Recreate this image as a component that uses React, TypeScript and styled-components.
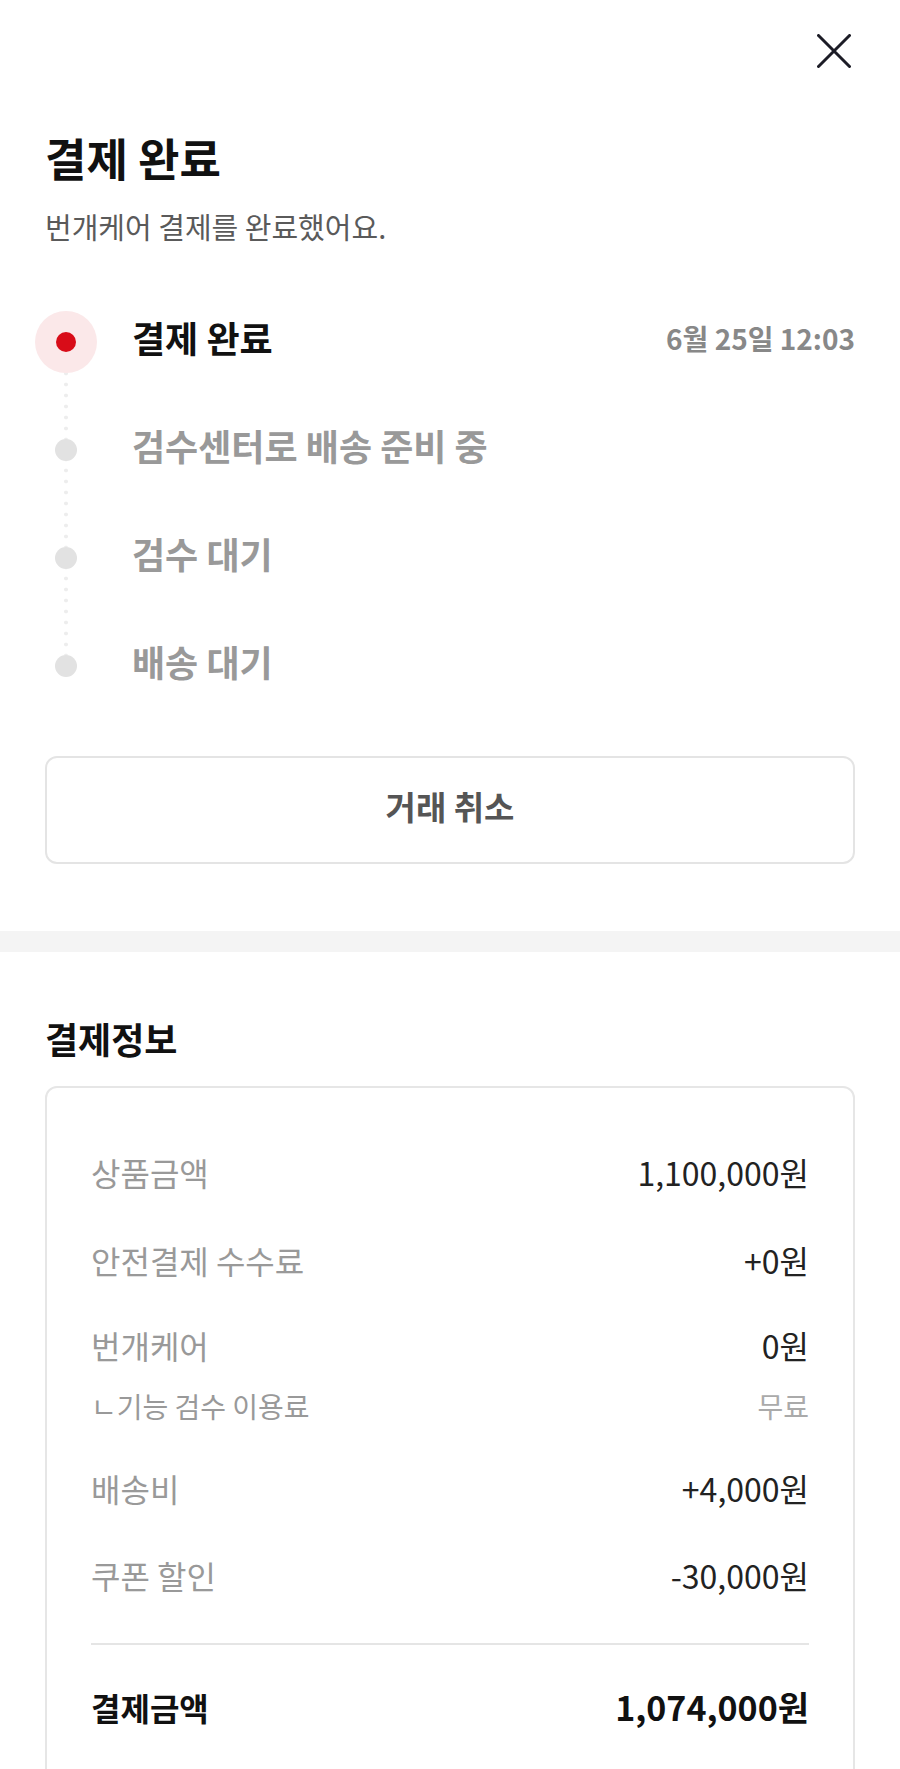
import React from "react"
import styled, { createGlobalStyle } from "styled-components"

const colors = {
  black: "#111111",
  text: "#222222",
  sub: "#5a5a5a",
  gray: "#999999",
  light: "#aaaaaa",
  line: "#e5e5e5",
  band: "#f4f4f4",
  red: "#d80c18",
  pink: "#fbe8e9",
  dot: "#e2e2e2",
}

const GlobalStyle = createGlobalStyle`
  body {
    margin: 0;
    background: #ffffff;
    font-family: "Noto Sans CJK KR", "Noto Sans", sans-serif;
    color: ${colors.text};
  }
`

const Page = styled.div`
  width: 900px;
  padding-bottom: 80px;
`

const Header = styled.header`
  display: flex;
  justify-content: flex-end;
  padding: 34px 49px 0 0;
`

const CloseButton = styled.button`
  width: 34px;
  height: 34px;
  padding: 0;
  border: 0;
  background: none;
  cursor: pointer;
  display: flex;
`

const Section = styled.section`
  padding: 0 45px;
`

const Title = styled.h1`
  margin: 62px 0 0;
  font-size: 45px;
  line-height: 56px;
  font-weight: 700;
  color: ${colors.black};
`

const Subtitle = styled.p`
  margin: 20px 0 0;
  font-size: 29px;
  line-height: 40px;
  color: ${colors.sub};
`

const Steps = styled.ol`
  list-style: none;
  margin: 42px 0 0 -10px;
  padding: 0;
`

const Step = styled.li`
  display: flex;
  align-items: center;
  height: 108px;
`

const Marker = styled.div<{ $last?: boolean }>`
  position: relative;
  width: 62px;
  height: 62px;
  flex-shrink: 0;
  display: flex;
  align-items: center;
  justify-content: center;

  &::after {
    content: "";
    display: ${(p) => (p.$last ? "none" : "block")};
    position: absolute;
    left: 29px;
    top: 42px;
    width: 4px;
    height: 86px;
    background-image: radial-gradient(circle, #ededed 1.6px, transparent 2.2px);
    background-size: 4px 11px;
    background-position: 0 4px;
  }
`

const ActiveRing = styled.div`
  width: 62px;
  height: 62px;
  border-radius: 50%;
  background: ${colors.pink};
  display: flex;
  align-items: center;
  justify-content: center;
  position: relative;
  z-index: 1;
`

const Dot = styled.span<{ $active?: boolean }>`
  width: ${(p) => (p.$active ? 20 : 22)}px;
  height: ${(p) => (p.$active ? 20 : 22)}px;
  border-radius: 50%;
  background: ${(p) => (p.$active ? colors.red : colors.dot)};
  position: relative;
  z-index: 1;
`

const StepLabel = styled.span<{ $active?: boolean }>`
  margin: 0 0 10px 35px;
  flex: 1;
  font-size: 36px;
  line-height: 48px;
  font-weight: 700;
  color: ${(p) => (p.$active ? colors.black : colors.gray)};
`

const StepDate = styled.span`
  margin-bottom: 8px;
  font-size: 28px;
  line-height: 40px;
  font-weight: 700;
  color: #888888;
`

const CancelButton = styled.button`
  display: block;
  width: 100%;
  height: 108px;
  margin-top: 36px;
  padding: 0 0 8px;
  border: 2px solid #e4e4e4;
  border-radius: 12px;
  background: #ffffff;
  font-family: inherit;
  font-size: 33px;
  font-weight: 700;
  color: #555555;
  cursor: pointer;
`

const Band = styled.div`
  height: 21px;
  margin-top: 67px;
  background: ${colors.band};
`

const SectionTitle = styled.h2`
  margin: 62px 0 0;
  font-size: 36px;
  line-height: 48px;
  font-weight: 700;
  color: ${colors.black};
`

const Card = styled.div`
  margin-top: 24px;
  border: 2px solid #e6e6e6;
  border-radius: 12px;
  padding: 62px 44px 60px;
`

const Row = styled.div<{ $sub?: boolean; $gap?: number }>`
  display: flex;
  justify-content: space-between;
  align-items: center;
  margin-top: ${(p) => p.$gap ?? 42}px;
  line-height: ${(p) => (p.$sub ? 36 : 44)}px;
  font-size: ${(p) => (p.$sub ? 28 : 32)}px;

  &:first-child {
    margin-top: 0;
  }
`

const Label = styled.span`
  color: ${colors.gray};
`

const Value = styled.span<{ $muted?: boolean }>`
  color: ${(p) => (p.$muted ? colors.light : colors.text)};
`

const Divider = styled.hr`
  margin: 46px 0 0;
  border: 0;
  height: 2px;
  background: ${colors.line};
`

const TotalRow = styled.div`
  display: flex;
  justify-content: space-between;
  align-items: center;
  margin-top: 40px;
  line-height: 44px;
  font-size: 32px;
  font-weight: 700;
  color: ${colors.black};
`

const TotalValue = styled.span`
  font-size: 34px;
`

const CloseIcon = () => (
  <svg width="34" height="34" viewBox="0 0 34 34" fill="none">
    <path
      d="M1.5 1.5L32.5 32.5M32.5 1.5L1.5 32.5"
      stroke="#1c1c26"
      strokeWidth="3"
      strokeLinecap="round"
    />
  </svg>
)

const steps = [
  { label: "결제 완료", date: "6월 25일 12:03" },
  { label: "검수센터로 배송 준비 중" },
  { label: "검수 대기" },
  { label: "배송 대기" },
]

const payments: { label: string; value: string; sub?: boolean; gap?: number }[] = [
  { label: "상품금액", value: "1,100,000원" },
  { label: "안전결제 수수료", value: "+0원", gap: 44 },
  { label: "번개케어", value: "0원", gap: 41 },
  { label: "ㄴ기능 검수 이용료", value: "무료", sub: true, gap: 21 },
  { label: "배송비", value: "+4,000원" },
  { label: "쿠폰 할인", value: "-30,000원", gap: 43 },
]

const App = () => {
  return (
    <Page>
      <GlobalStyle />
      <Header>
        <CloseButton aria-label="닫기">
          <CloseIcon />
        </CloseButton>
      </Header>
      <Section>
        <Title>결제 완료</Title>
        <Subtitle>번개케어 결제를 완료했어요.</Subtitle>
        <Steps>
          {steps.map((step, i) => (
            <Step key={step.label}>
              <Marker $last={i === steps.length - 1}>
                {i === 0 ? (
                  <ActiveRing>
                    <Dot $active />
                  </ActiveRing>
                ) : (
                  <Dot />
                )}
              </Marker>
              <StepLabel $active={i === 0}>{step.label}</StepLabel>
              {step.date && <StepDate>{step.date}</StepDate>}
            </Step>
          ))}
        </Steps>
        <CancelButton>거래 취소</CancelButton>
      </Section>
      <Band />
      <Section>
        <SectionTitle>결제정보</SectionTitle>
        <Card>
          {payments.map((p) => (
            <Row key={p.label} $sub={p.sub} $gap={p.gap}>
              <Label>{p.label}</Label>
              <Value $muted={p.sub}>{p.value}</Value>
            </Row>
          ))}
          <Divider />
          <TotalRow>
            <span>결제금액</span>
            <TotalValue>1,074,000원</TotalValue>
          </TotalRow>
        </Card>
      </Section>
    </Page>
  )
}

export default App
